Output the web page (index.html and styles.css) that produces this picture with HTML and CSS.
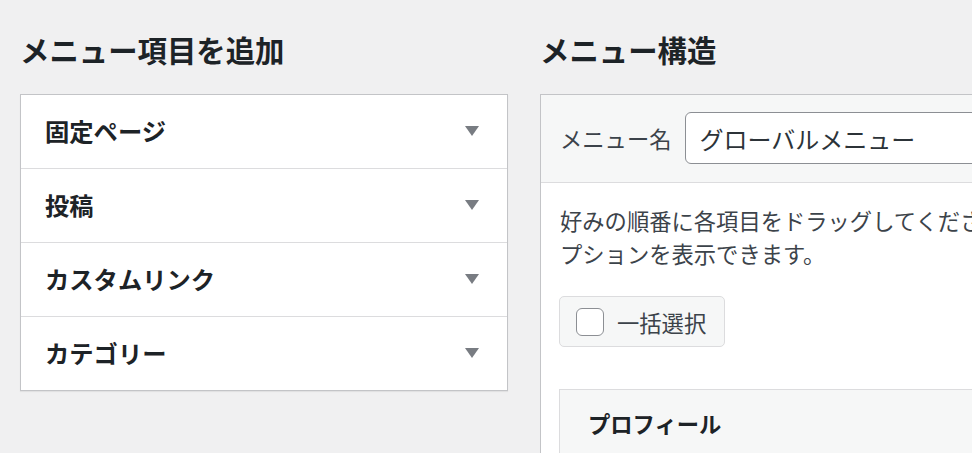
FILE: index.html
```html
<!DOCTYPE html>
<html lang="ja">
<head>
<meta charset="utf-8">
<title>メニュー</title>
<link rel="stylesheet" href="styles.css">
</head>
<body>
<div class="page">
  <section class="col col-left">
    <h2 class="col-title">メニュー項目を追加</h2>
    <div class="accordion">
      <div class="acc-row">
        <h3 class="acc-title">固定ページ</h3>
        <svg class="acc-arrow" width="14" height="10" viewBox="0 0 14 10"><polygon points="0,0 14,0 7,10"/></svg>
      </div>
      <div class="acc-row">
        <h3 class="acc-title">投稿</h3>
        <svg class="acc-arrow" width="14" height="10" viewBox="0 0 14 10"><polygon points="0,0 14,0 7,10"/></svg>
      </div>
      <div class="acc-row">
        <h3 class="acc-title">カスタムリンク</h3>
        <svg class="acc-arrow" width="14" height="10" viewBox="0 0 14 10"><polygon points="0,0 14,0 7,10"/></svg>
      </div>
      <div class="acc-row">
        <h3 class="acc-title">カテゴリー</h3>
        <svg class="acc-arrow" width="14" height="10" viewBox="0 0 14 10"><polygon points="0,0 14,0 7,10"/></svg>
      </div>
    </div>
  </section>
  <section class="col col-right">
    <h2 class="col-title">メニュー構造</h2>
    <div class="menu-edit">
      <div class="menu-header">
        <label class="menu-name-label" for="menu-name">メニュー名</label>
        <input class="menu-name-input" id="menu-name" type="text" value="グローバルメニュー">
      </div>
      <div class="menu-body">
        <p class="menu-desc">好みの順番に各項目をドラッグしてください。項目の右側にある矢印をクリックすると、追加の設定オプションを表示できます。</p>
        <label class="bulk">
          <input class="bulk-check" type="checkbox">
          <span class="bulk-text">一括選択</span>
        </label>
        <div class="menu-item">
          <span class="menu-item-title">プロフィール</span>
        </div>
      </div>
    </div>
  </section>
</div>
</body>
</html>
```
FILE: styles.css
```css
html, body {
  margin: 0;
  padding: 0;
  overflow: hidden;
  background: #f0f0f1;
  font-family: "Noto Sans CJK JP", "Noto Sans", sans-serif;
  color: #3c434a;
}

.page {
  display: flex;
  gap: 32px;
  padding: 29px 0 0 20px;
  width: max-content;
}

.col-left {
  width: 488px;
  flex: 0 0 488px;
}

.col-right {
  width: 1100px;
  flex: 0 0 1100px;
}

.col-title {
  margin: 0 0 25px;
  font-size: 29.4px;
  line-height: 40px;
  font-weight: 700;
  color: #1d2327;
}

.accordion {
  background: #fff;
  border: 1px solid #c3c4c7;
  box-shadow: 0 1px 1px rgba(0, 0, 0, 0.06);
}

.acc-row {
  height: 73px;
  box-sizing: border-box;
  display: flex;
  align-items: center;
  justify-content: space-between;
  padding: 0 28px 1px 24px;
}

.acc-row + .acc-row {
  border-top: 1px solid #dcdcde;
  height: 74px;
}

.acc-title {
  margin: 0;
  font-size: 24.3px;
  line-height: 1.4;
  font-weight: 700;
  color: #1d2327;
}

.acc-arrow {
  display: block;
  fill: #787c82;
}

.menu-edit {
  background: #fff;
  border: 1px solid #c3c4c7;
  height: 400px;
}

.menu-header {
  display: flex;
  align-items: center;
  background: #f6f7f7;
  border-bottom: 1px solid #dcdcde;
  padding: 17px 19px 18px;
}

.menu-name-label {
  font-size: 22.3px;
  line-height: 30px;
  color: #3c434a;
  margin-right: 13px;
}

.menu-name-input {
  box-sizing: border-box;
  height: 52px;
  width: 420px;
  margin: 0;
  padding: 0 14px;
  border: 1px solid #8c8f94;
  border-radius: 6px;
  background: #fff;
  font-family: "Noto Sans CJK JP", "Noto Sans", sans-serif;
  font-size: 24px;
  color: #2c3338;
}

.menu-body {
  padding: 21px 19px 0;
}

.menu-desc {
  margin: 0;
  width: 46.5em;
  font-size: 22.3px;
  line-height: 33.2px;
  color: #3c434a;
}

.bulk {
  display: flex;
  align-items: center;
  gap: 13px;
  width: max-content;
  box-sizing: border-box;
  height: 51px;
  margin-top: 26px;
  margin-left: -1px;
  padding: 0 18px 0 16px;
  background: #f6f7f7;
  border: 1px solid #dcdcde;
  border-radius: 5px;
}

.bulk-check {
  appearance: none;
  -webkit-appearance: none;
  display: block;
  margin: 0;
  width: 28px;
  height: 28px;
  box-sizing: border-box;
  border: 1px solid #8c8f94;
  border-radius: 6px;
  background: #fff;
}

.bulk-text {
  font-size: 22.3px;
  line-height: 30px;
  color: #3c434a;
}

.menu-item {
  margin-top: 42px;
  margin-left: -1px;
  background: #f6f7f7;
  border: 1px solid #dcdcde;
  padding: 18px 27px 18px 28px;
  height: 100px;
}

.menu-item-title {
  font-size: 22.3px;
  line-height: 30px;
  font-weight: 700;
  color: #1d2327;
}
```
